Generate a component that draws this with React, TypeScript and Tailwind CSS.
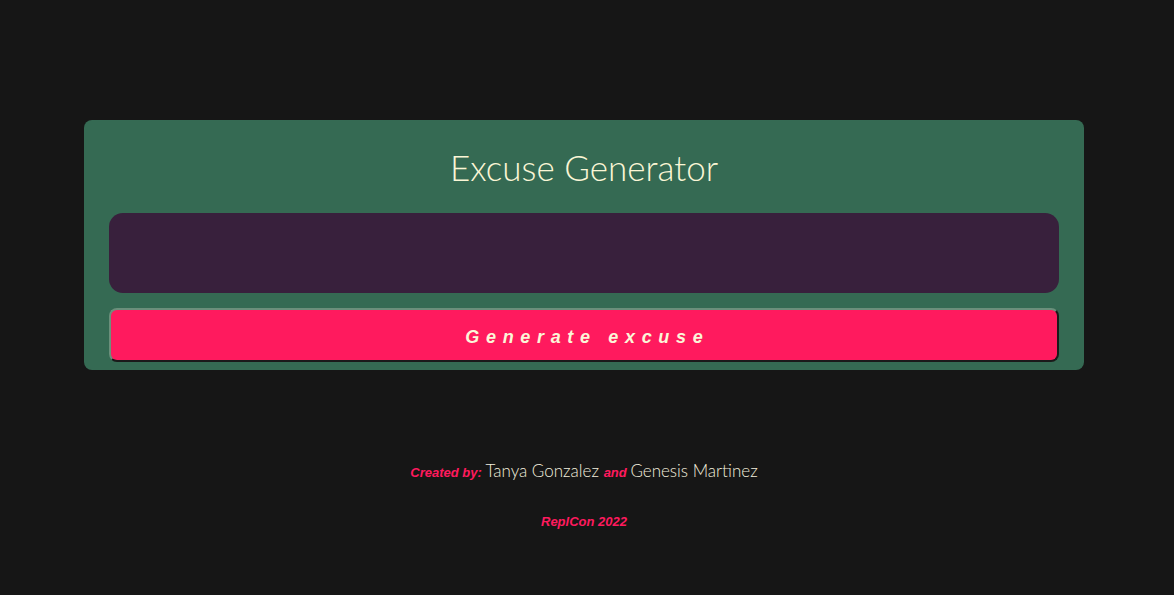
export default function App() {
  return (
    <div className="min-h-[595px] w-[1168px] bg-[#161616] flex flex-col items-center pt-[120px] shadow-[6px_0_0_#161616]">
      <div className="w-[1000px] h-[250px] rounded-lg bg-[#356a53] px-[25px] pt-[22px] flex flex-col">
        <h1 className="text-center text-[35px] leading-[50px] font-light text-[#fbf6d6] [font-family:'Lato','Noto_Sans',sans-serif]">
          Excuse Generator
        </h1>
        <div className="mt-[21px] h-[80px] rounded-[14px] bg-[#38203c]" />
        <button className="mt-[15px] h-[54px] rounded-lg bg-[#ff1a5e] border-2 border-t-[#6b8f7b] border-l-[#6b8f7b] border-r-[#1a1a1a] border-b-[#1a1a1a] text-[#fbf6d9] italic font-bold text-[18px] leading-[54px] tracking-[0.37em] pl-[0.37em] [font-family:'Liberation_Sans',sans-serif]">
          Generate excuse
        </button>
      </div>
      <p className="mt-[88px] text-[17px] text-[#f2eedd] font-light [font-family:'Lato','Noto_Sans',sans-serif]">
        <span className="italic font-bold text-[13px] text-[#ff1a5e] [font-family:'Liberation_Sans',sans-serif]">Created by: </span>
        Tanya Gonzalez{' '}
        <span className="italic font-bold text-[13px] text-[#ff1a5e] [font-family:'Liberation_Sans',sans-serif]">and </span>
        Genesis Martinez
      </p>
      <p className="mt-[28px] italic font-bold text-[13px] text-[#ff1a5e] [font-family:'Liberation_Sans',sans-serif]">
        ReplCon 2022
      </p>
    </div>
  )
}
